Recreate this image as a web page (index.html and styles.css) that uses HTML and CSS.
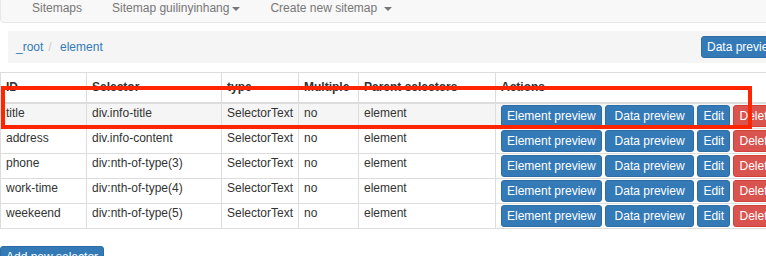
FILE: index.html
```html
<!DOCTYPE html>
<html lang="en">
<head>
  <meta charset="UTF-8" />
  <title>Selectors - element</title>
  <link rel="stylesheet" href="styles.css">
</head>
<body>
  <div class="page">
    <!-- Top navigation -->
    <div class="navbar">
      <ul class="nav">
        <li><a href="#">Sitemaps</a></li>
        <li><a href="#">Sitemap guilinyinhang<b class="caret"></b></a></li>
        <li><a href="#">Create new sitemap <b class="caret"></b></a></li>
      </ul>
    </div>

    <!-- Breadcrumb -->
    <div class="breadcrumb-bar">
      <ol class="breadcrumb">
        <li><a href="#">_root</a></li>
        <li><a href="#">element</a></li>
      </ol>
      <button class="btn btn-primary">Data preview</button>
    </div>

    <!-- Selector table -->
    <table class="selector-table">
      <colgroup>
        <col class="col-id">
        <col class="col-selector">
        <col class="col-type">
        <col class="col-multiple">
        <col class="col-parent">
        <col class="col-actions">
      </colgroup>
      <thead>
        <tr>
          <th>ID</th>
          <th>Selector</th>
          <th>type</th>
          <th>Multiple</th>
          <th>Parent selectors</th>
          <th>Actions</th>
        </tr>
      </thead>
      <tbody>
        <tr class="row-hover">
          <td>title</td>
          <td>div.info-title</td>
          <td>SelectorText</td>
          <td>no</td>
          <td>element</td>
          <td class="actions">
            <button class="btn btn-primary">Element preview</button>
            <button class="btn btn-primary btn-wide">Data preview</button>
            <button class="btn btn-primary">Edit</button>
            <button class="btn btn-danger">Delete</button>
          </td>
        </tr>
        <tr>
          <td>address</td>
          <td>div.info-content</td>
          <td>SelectorText</td>
          <td>no</td>
          <td>element</td>
          <td class="actions">
            <button class="btn btn-primary">Element preview</button>
            <button class="btn btn-primary btn-wide">Data preview</button>
            <button class="btn btn-primary">Edit</button>
            <button class="btn btn-danger">Delete</button>
          </td>
        </tr>
        <tr>
          <td>phone</td>
          <td>div:nth-of-type(3)</td>
          <td>SelectorText</td>
          <td>no</td>
          <td>element</td>
          <td class="actions">
            <button class="btn btn-primary">Element preview</button>
            <button class="btn btn-primary btn-wide">Data preview</button>
            <button class="btn btn-primary">Edit</button>
            <button class="btn btn-danger">Delete</button>
          </td>
        </tr>
        <tr>
          <td>work-time</td>
          <td>div:nth-of-type(4)</td>
          <td>SelectorText</td>
          <td>no</td>
          <td>element</td>
          <td class="actions">
            <button class="btn btn-primary">Element preview</button>
            <button class="btn btn-primary btn-wide">Data preview</button>
            <button class="btn btn-primary">Edit</button>
            <button class="btn btn-danger">Delete</button>
          </td>
        </tr>
        <tr>
          <td>weekeend</td>
          <td>div:nth-of-type(5)</td>
          <td>SelectorText</td>
          <td>no</td>
          <td>element</td>
          <td class="actions">
            <button class="btn btn-primary">Element preview</button>
            <button class="btn btn-primary btn-wide">Data preview</button>
            <button class="btn btn-primary">Edit</button>
            <button class="btn btn-danger">Delete</button>
          </td>
        </tr>
      </tbody>
    </table>

    <button class="btn btn-primary add-btn">Add new selector</button>

    <!-- Red annotation box drawn over the first row -->
    <div class="highlight"></div>
  </div>
</body>
</html>
```

FILE: styles.css
```css
/*
  --------------------------------------------
  BASIC RESETS
  --------------------------------------------
*/
* {
  margin: 0;
  padding: 0;
  box-sizing: border-box;
}

html,
body {
  overflow: hidden;
}

body {
  font-family: "Liberation Sans", Arial, Helvetica, sans-serif;
  font-size: 12px;
  line-height: 1.42857;
  color: #333;
  background-color: #fff;
}

a {
  color: #337ab7;
  text-decoration: none;
}

.page {
  display: flow-root;
  position: relative;
  width: 800px;
}

/*
  --------------------------------------------
  NAVBAR
  --------------------------------------------
*/
.navbar {
  margin-top: -6px;
  padding: 5px 0 5px 16px;
  background-color: #f8f8f8;
  border: 1px solid #e7e7e7;
  border-radius: 4px;
}

.nav {
  list-style: none;
  display: flex;
}

.nav a {
  display: block;
  padding: 0 15px;
  color: #777;
}

.caret {
  display: inline-block;
  width: 0;
  height: 0;
  margin-left: 3px;
  vertical-align: middle;
  border-top: 4px solid #777;
  border-left: 4px solid transparent;
  border-right: 4px solid transparent;
}

/*
  --------------------------------------------
  BREADCRUMB
  --------------------------------------------
*/
.breadcrumb-bar {
  display: flex;
  align-items: center;
  width: 783px;
  height: 32px;
  margin: 8px 0 9px 8px;
  padding: 0 8px 0 8px;
  background-color: #f5f5f5;
}

.breadcrumb {
  list-style: none;
  display: flex;
  flex: 1;
}

.breadcrumb li + li::before {
  content: "/\00a0";
  padding: 0 5px;
  color: #ccc;
}

/*
  --------------------------------------------
  BUTTONS
  --------------------------------------------
*/
.btn {
  display: inline-block;
  padding: 1px 5px;
  font-family: inherit;
  font-size: 12px;
  line-height: 1.5;
  color: #fff;
  border: 1px solid transparent;
  border-radius: 3px;
  white-space: nowrap;
  cursor: pointer;
}

.btn-primary {
  background-color: #337ab7;
  border-color: #2e6da4;
}

.btn-danger {
  background-color: #d9534f;
  border-color: #d43f3a;
}

.btn-wide {
  padding-left: 8.5px;
  padding-right: 8.5px;
}

.add-btn {
  margin-top: 17px;
}

/*
  --------------------------------------------
  SELECTOR TABLE
  --------------------------------------------
*/
.selector-table {
  width: 788px;
  table-layout: fixed;
  border-collapse: collapse;
  border: 1px solid #ddd;
}

.col-id { width: 86px; }
.col-selector { width: 135px; }
.col-type { width: 77px; }
.col-multiple { width: 60px; }
.col-parent { width: 137px; }
.col-actions { width: 293px; }

.selector-table th {
  padding: 6px 5px 6px;
  text-align: left;
  font-weight: bold;
  vertical-align: bottom;
  border: 1px solid #ddd;
  border-bottom: 2px solid #ddd;
  white-space: nowrap;
  overflow: hidden;
}

.selector-table td {
  padding: 1px 5px;
  vertical-align: top;
  border: 1px solid #ddd;
  white-space: nowrap;
  overflow: hidden;
}

.selector-table .row-hover td {
  background-color: #f5f5f5;
}

/*
  Annotation overlay
*/
.highlight {
  position: absolute;
  left: 1px;
  top: 86px;
  width: 751px;
  height: 43px;
  border: 4px solid #fe2500;
  pointer-events: none;
}
```
